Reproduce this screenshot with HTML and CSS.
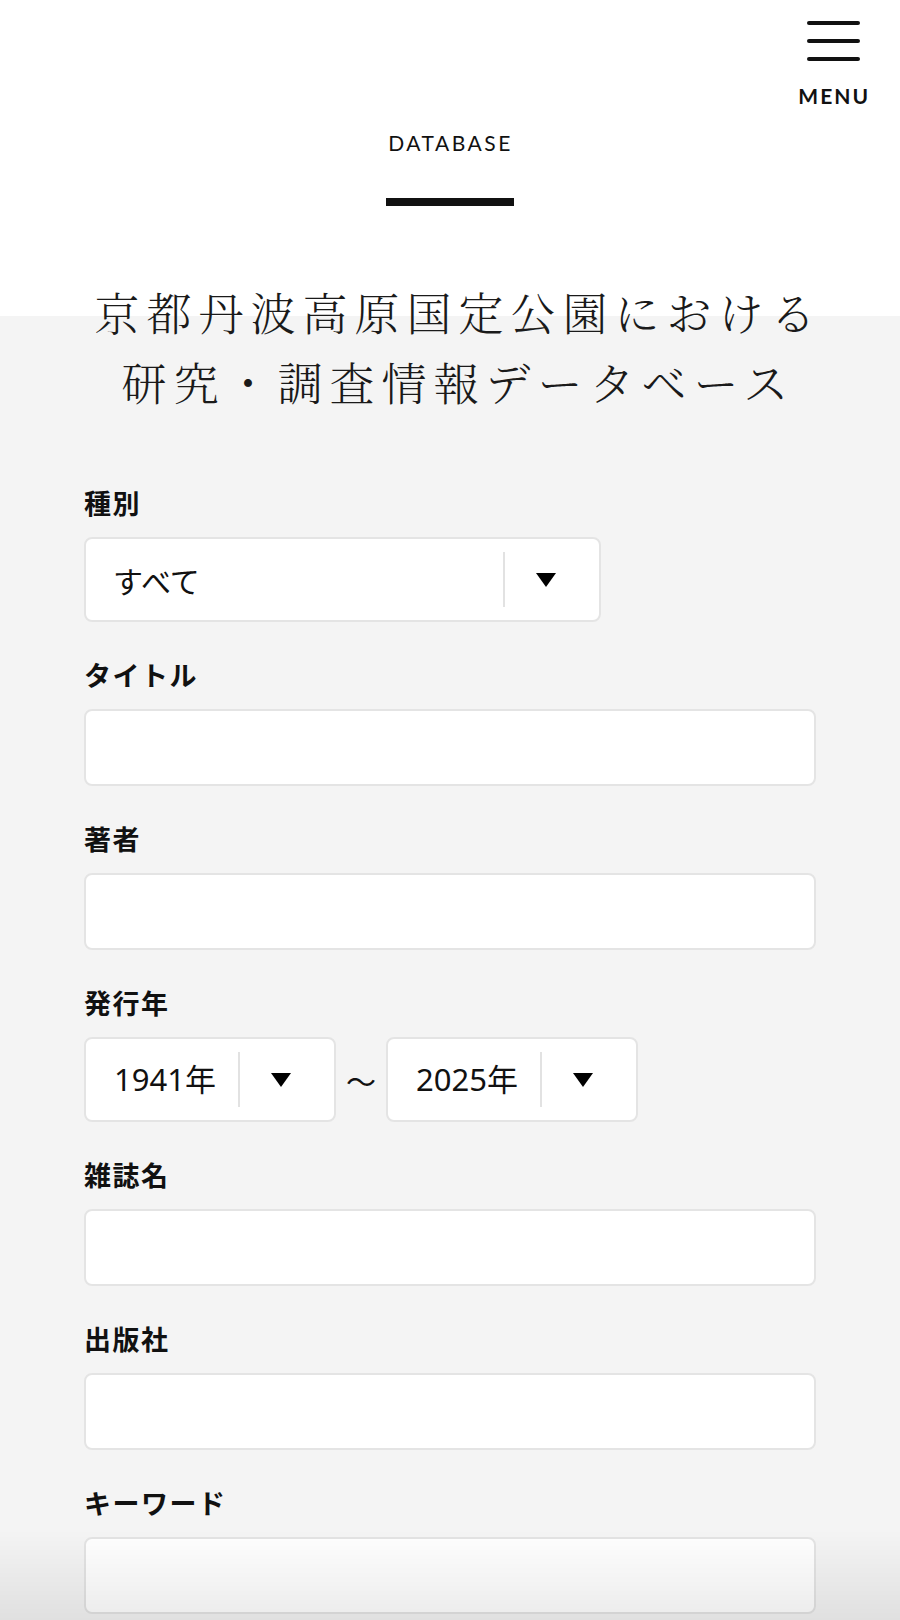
FILE: index.html
```html
<!DOCTYPE html>
<html lang="ja">
<head>
<meta charset="utf-8">
<title>DATABASE</title>
<link rel="stylesheet" href="styles.css">
</head>
<body>
<div class="page">
  <header class="topbar">
    <button class="menu-btn" type="button">
      <span class="menu-lines"><span></span><span></span><span></span></span>
      <span class="menu-label">MENU</span>
    </button>
  </header>

  <section class="page-head">
    <p class="eyebrow">DATABASE</p>
    <span class="eyebrow-bar"></span>
    <h1 class="page-title">京都丹波高原国定公園における<br>研究・調査情報データベース</h1>
  </section>

  <form class="search-form">
    <div class="field">
      <label class="field-label">種別</label>
      <div class="select select-wide">
        <span class="select-value">すべて</span>
        <span class="select-divider"></span>
        <span class="select-arrow"><svg width="20" height="14" viewBox="0 0 20 14"><polygon points="0,0 20,0 10,14" fill="#000"/></svg></span>
      </div>
    </div>

    <div class="field">
      <label class="field-label">タイトル</label>
      <input class="text-input" type="text">
    </div>

    <div class="field">
      <label class="field-label">著者</label>
      <input class="text-input" type="text">
    </div>

    <div class="field">
      <label class="field-label">発行年</label>
      <div class="year-range">
        <div class="select select-year">
          <span class="select-value select-value-num">1941年</span>
          <span class="select-divider"></span>
          <span class="select-arrow"><svg width="20" height="14" viewBox="0 0 20 14"><polygon points="0,0 20,0 10,14" fill="#000"/></svg></span>
        </div>
        <span class="tilde">～</span>
        <div class="select select-year">
          <span class="select-value select-value-num">2025年</span>
          <span class="select-divider"></span>
          <span class="select-arrow"><svg width="20" height="14" viewBox="0 0 20 14"><polygon points="0,0 20,0 10,14" fill="#000"/></svg></span>
        </div>
      </div>
    </div>

    <div class="field">
      <label class="field-label">雑誌名</label>
      <input class="text-input" type="text">
    </div>

    <div class="field">
      <label class="field-label">出版社</label>
      <input class="text-input" type="text">
    </div>

    <div class="field">
      <label class="field-label">キーワード</label>
      <input class="text-input" type="text">
    </div>
  </form>

  <div class="bottom-fade"></div>
</div>
</body>
</html>
```

FILE: styles.css
```css
html, body {
  margin: 0;
  padding: 0;
}

body {
  font-family: "Noto Sans CJK JP", "Noto Sans", sans-serif;
  color: #111;
  background: #f4f4f4;
}

.page {
  background: linear-gradient(to bottom, #fff 0, #fff 316px, #f4f4f4 316px);
  min-height: 1620px;
  padding-bottom: 120px;
}

/* top bar */
.topbar {
  display: flex;
  justify-content: flex-end;
  padding: 21px 30px 0 0;
}

.menu-btn {
  display: flex;
  flex-direction: column;
  align-items: center;
  background: none;
  border: 0;
  padding: 0;
  font: inherit;
  color: #111;
  cursor: pointer;
}

.menu-lines {
  display: flex;
  flex-direction: column;
  gap: 14px;
}

.menu-lines span {
  display: block;
  width: 53px;
  height: 4px;
  border-radius: 2px;
  background: #111;
}

.menu-label {
  margin-top: 24px;
  font-family: Lato, "Noto Sans", sans-serif;
  font-weight: 700;
  font-size: 21px;
  line-height: 22px;
  letter-spacing: 2px;
  padding-left: 2px;
}

/* heading */
.page-head {
  display: flex;
  flex-direction: column;
  align-items: center;
  margin-top: 25px;
}

.eyebrow {
  margin: 0;
  font-family: Lato, "Noto Sans", sans-serif;
  font-weight: 400;
  font-size: 21px;
  line-height: 21px;
  letter-spacing: 2.5px;
  padding-left: 1px;
}

.eyebrow-bar {
  display: block;
  width: 128px;
  height: 8px;
  background: #111;
  margin-top: 45px;
}

.page-title {
  margin: 71px 0 0;
  font-family: "Noto Serif CJK JP", "Noto Sans CJK JP", serif;
  font-weight: 300;
  font-size: 45px;
  line-height: 70px;
  letter-spacing: 7px;
  padding-left: 17px;
  text-align: center;
  white-space: nowrap;
  color: #1a1a1a;
}

/* form */
.search-form {
  margin: 67px 84px 0;
  display: flex;
  flex-direction: column;
  gap: 34px;
}

.field {
  display: flex;
  flex-direction: column;
  align-items: flex-start;
}

.field-label {
  font-size: 27px;
  font-weight: 700;
  line-height: 38px;
  letter-spacing: 1.5px;
  margin-bottom: 15px;
}

.text-input {
  display: block;
  width: 100%;
  box-sizing: border-box;
  height: 77px;
  margin: 0;
  padding: 0 28px;
  border: 2px solid #e4e4e4;
  border-radius: 8px;
  background: #fff;
  font: inherit;
  font-size: 28px;
  outline: none;
  -webkit-appearance: none;
  appearance: none;
}

.select {
  box-sizing: border-box;
  height: 85px;
  display: flex;
  align-items: center;
  background: #fff;
  border: 2px solid #e4e4e4;
  border-radius: 8px;
  padding-right: 12px;
}

.select-wide {
  width: 517px;
}

.select-year {
  width: 252px;
}

.select-value {
  flex: 1;
  padding-left: 27px;
  font-size: 30px;
  line-height: 1;
  white-space: nowrap;
}

.select-value-num {
  font-family: "Noto Sans", "Noto Sans CJK JP", sans-serif;
  font-size: 31px;
  padding-left: 28px;
}

.select-divider {
  width: 2px;
  height: 55px;
  background: #e2e2e2;
}

.select-arrow {
  width: 82px;
  display: flex;
  justify-content: center;
  align-items: center;
}

.select-arrow svg {
  display: block;
}

.year-range {
  display: flex;
  align-items: center;
}

.tilde {
  width: 50px;
  text-align: center;
  font-size: 30px;
  line-height: 1;
}

/* bottom fade overlay */
.bottom-fade {
  position: fixed;
  left: 0;
  right: 0;
  bottom: 0;
  height: 90px;
  background: linear-gradient(to bottom, rgba(0, 0, 0, 0), rgba(0, 0, 0, 0.08));
  pointer-events: none;
}
```
